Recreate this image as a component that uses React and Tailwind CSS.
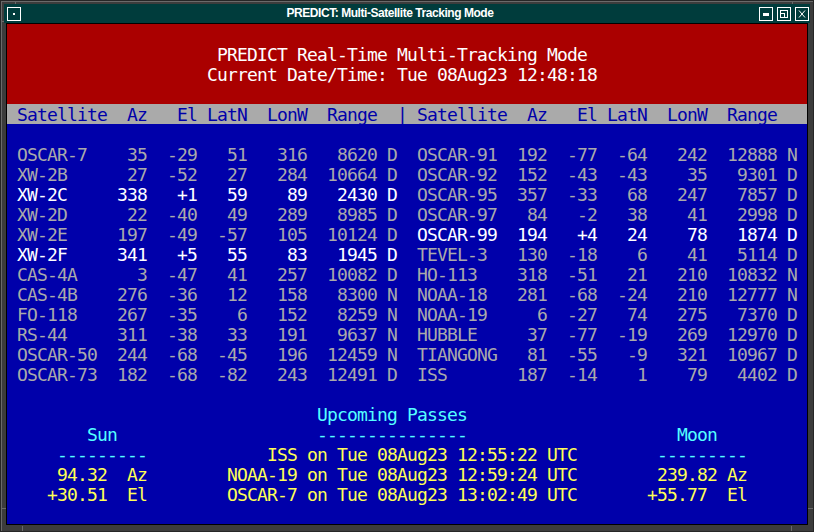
import React from "react";

const GRAY = "text-[#aaaaaa]";
const WHITE = "text-white";
const CYAN = "text-[#55ffff]";
const YEL = "text-[#ffff55]";
const HBLUE = "text-[#0000aa]";

function satRow(d) {
  const [name, az, el, lat, lon, rng, st] = d;
  return ` ${name.padEnd(10)}${az.padStart(3)}  ${el.padStart(3)} ${lat.padStart(4)} ${lon.padStart(5)} ${rng.padStart(6)} ${st} `;
}

const left = [
  ["OSCAR-7", "35", "-29", "51", "316", "8620", "D"],
  ["XW-2B", "27", "-52", "27", "284", "10664", "D"],
  ["XW-2C", "338", "+1", "59", "89", "2430", "D", true],
  ["XW-2D", "22", "-40", "49", "289", "8985", "D"],
  ["XW-2E", "197", "-49", "-57", "105", "10124", "D"],
  ["XW-2F", "341", "+5", "55", "83", "1945", "D", true],
  ["CAS-4A", "3", "-47", "41", "257", "10082", "D"],
  ["CAS-4B", "276", "-36", "12", "158", "8300", "N"],
  ["FO-118", "267", "-35", "6", "152", "8259", "N"],
  ["RS-44", "311", "-38", "33", "191", "9637", "N"],
  ["OSCAR-50", "244", "-68", "-45", "196", "12459", "N"],
  ["OSCAR-73", "182", "-68", "-82", "243", "12491", "D"],
];
const right = [
  ["OSCAR-91", "192", "-77", "-64", "242", "12888", "N"],
  ["OSCAR-92", "152", "-43", "-43", "35", "9301", "D"],
  ["OSCAR-95", "357", "-33", "68", "247", "7857", "D"],
  ["OSCAR-97", "84", "-2", "38", "41", "2998", "D"],
  ["OSCAR-99", "194", "+4", "24", "78", "1874", "D", true],
  ["TEVEL-3", "130", "-18", "6", "41", "5114", "D"],
  ["HO-113", "318", "-51", "21", "210", "10832", "N"],
  ["NOAA-18", "281", "-68", "-24", "210", "12777", "N"],
  ["NOAA-19", "6", "-27", "74", "275", "7370", "D"],
  ["HUBBLE", "37", "-77", "-19", "269", "12970", "D"],
  ["TIANGONG", "81", "-55", "-9", "321", "10967", "D"],
  ["ISS", "187", "-14", "1", "79", "4402", "D"],
];

function Line({ segs = [], bg = "" }) {
  let col = 0;
  const out = [];
  segs.forEach(([c, t, cls], i) => {
    if (c > col) out.push(" ".repeat(c - col));
    out.push(
      <span key={i} className={cls}>
        {t}
      </span>
    );
    col = c + t.length;
  });
  return (
    <div className={`h-[20px] pt-[2px] leading-[18px] whitespace-pre ${bg}`}>
      {out.length ? out : " "}
    </div>
  );
}

function Box({ children }) {
  return (
    <div className="w-[14px] h-[14px] border border-white flex items-center justify-center">
      {children}
    </div>
  );
}

export default function App() {
  const header = [
    [1, "Satellite", HBLUE],
    [12, "Az", HBLUE],
    [17, "El", HBLUE],
    [20, "LatN", HBLUE],
    [26, "LonW", HBLUE],
    [32, "Range", HBLUE],
    [39, "|", HBLUE],
    [41, "Satellite", HBLUE],
    [52, "Az", HBLUE],
    [57, "El", HBLUE],
    [60, "LatN", HBLUE],
    [66, "LonW", HBLUE],
    [72, "Range", HBLUE],
  ];

  return (
    <div className="relative w-[814px] h-[532px] bg-[#3c3c3c] border border-[#262626] shadow-[inset_1px_1px_0_#6a6a6a] px-[3px] pt-[3px] flex flex-col overflow-hidden">
      {/* title bar */}
      <div className="h-[19px] bg-[#003c3c] flex items-center pl-[3px] pr-[1px]">
        <Box>
          <div className="w-[2px] h-[2px] bg-white" />
        </Box>
        <div className="flex-1 text-center text-white font-['Liberation_Sans',sans-serif] font-bold text-[12px] tracking-[-0.45px] leading-[19px]">
          PREDICT: Multi-Satellite Tracking Mode
        </div>
        <div className="flex gap-[4px]">
          <Box>
            <div className="w-[6px] h-[3px] bg-white mt-[2px]" />
          </Box>
          <Box>
            <svg width="12" height="12" viewBox="0 0 12 12">
              <rect x="2.5" y="2.5" width="7" height="7" fill="none" stroke="white" strokeWidth="1" />
              <rect x="2.5" y="5.5" width="4" height="4" fill="none" stroke="white" strokeWidth="1" />
            </svg>
          </Box>
          <Box>
            <svg width="12" height="12" viewBox="0 0 12 12">
              <path d="M3 2.5 L9 9.5 M9 2.5 L3 9.5" stroke="white" strokeWidth="1" fill="none" />
            </svg>
          </Box>
        </div>
      </div>

      {/* terminal */}
      <div className="mx-[2px] border border-black bg-[#0000aa] font-['DejaVu_Sans_Mono',monospace] text-[18px] tracking-[-0.837px] text-[#aaaaaa]">
        <div className="bg-[#aa0000]">
          <Line />
          <Line segs={[[21, "PREDICT Real-Time Multi-Tracking Mode", WHITE]]} />
          <Line segs={[[20, "Current Date/Time: Tue 08Aug23 12:48:18", WHITE]]} />
          <Line />
        </div>
        <Line segs={header} bg="bg-[#aaaaaa]" />
        <Line />
        {left.map((l, i) => {
          const r = right[i];
          return (
            <Line
              key={i}
              segs={[
                [0, satRow(l), l[7] ? WHITE : GRAY],
                [40, satRow(r), r[7] ? WHITE : GRAY],
              ]}
            />
          );
        })}
        <Line />
        <Line segs={[[31, "Upcoming Passes", CYAN]]} />
        <Line
          segs={[
            [8, "Sun", CYAN],
            [31, "---------------", CYAN],
            [67, "Moon", CYAN],
          ]}
        />
        <Line
          segs={[
            [5, "---------", CYAN],
            [26, "ISS on Tue 08Aug23 12:55:22 UTC", YEL],
            [65, "---------", CYAN],
          ]}
        />
        <Line
          segs={[
            [5, "94.32  Az", YEL],
            [22, "NOAA-19 on Tue 08Aug23 12:59:24 UTC", YEL],
            [65, "239.82 Az", YEL],
          ]}
        />
        <Line
          segs={[
            [4, "+30.51  El", YEL],
            [22, "OSCAR-7 on Tue 08Aug23 13:02:49 UTC", YEL],
            [64, "+55.77  El", YEL],
          ]}
        />
        <Line />
      </div>

      {/* frame handle notches */}
      <div className="absolute left-[14px] top-0 w-[1px] h-[3px] bg-[#6a6a6a]" />
      <div className="absolute left-0 top-[20px] w-[3px] h-[1px] bg-[#6a6a6a]" />
      <div className="absolute right-[20px] top-0 w-[1px] h-[3px] bg-[#6a6a6a]" />
      <div className="absolute left-0 bottom-[22px] w-[5px] h-[1px] bg-[#6a6a6a]" />
      <div className="absolute right-0 bottom-[22px] w-[5px] h-[1px] bg-[#6a6a6a]" />
      <div className="absolute left-[21px] bottom-0 w-[1px] h-[5px] bg-[#6a6a6a]" />
      <div className="absolute right-[21px] bottom-0 w-[1px] h-[5px] bg-[#6a6a6a]" />
    </div>
  );
}
